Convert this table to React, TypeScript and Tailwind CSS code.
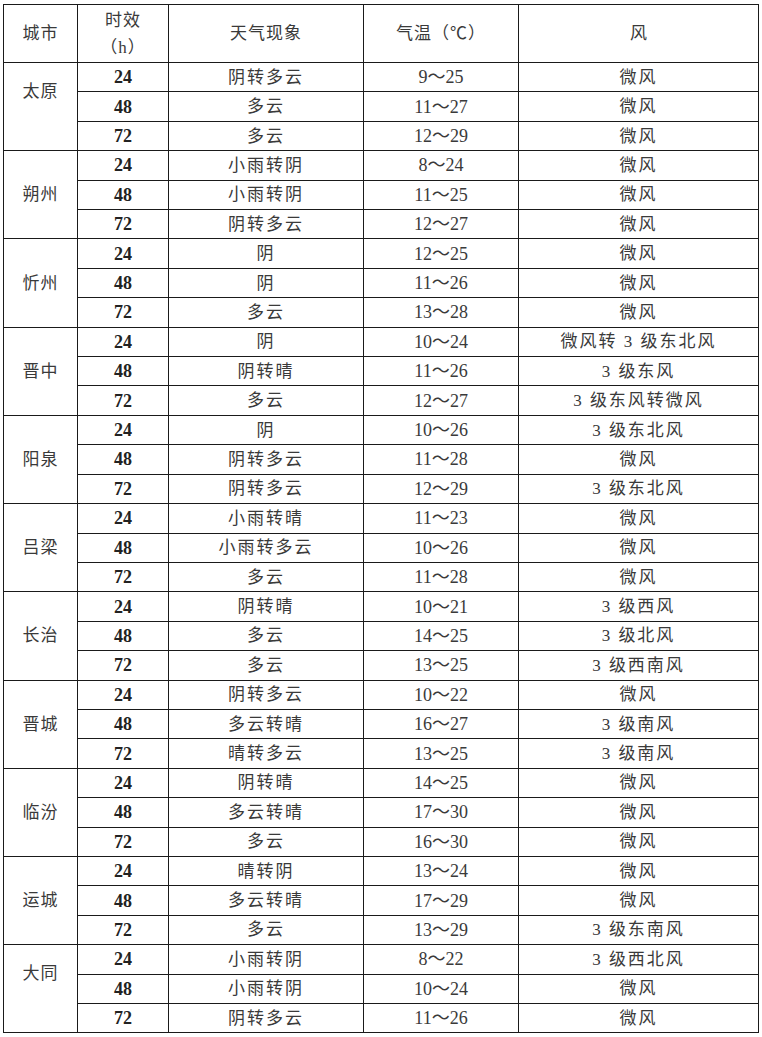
import React from 'react';

type Row = { t: string; wx: string; temp: string; wind: string };
type City = { name: string; rows: Row[]; raise?: boolean };

const cities: City[] = [
  { name: '太原', raise: true, rows: [
    { t: '24', wx: '阴转多云', temp: '9～25', wind: '微风' },
    { t: '48', wx: '多云', temp: '11～27', wind: '微风' },
    { t: '72', wx: '多云', temp: '12～29', wind: '微风' },
  ] },
  { name: '朔州', rows: [
    { t: '24', wx: '小雨转阴', temp: '8～24', wind: '微风' },
    { t: '48', wx: '小雨转阴', temp: '11～25', wind: '微风' },
    { t: '72', wx: '阴转多云', temp: '12～27', wind: '微风' },
  ] },
  { name: '忻州', rows: [
    { t: '24', wx: '阴', temp: '12～25', wind: '微风' },
    { t: '48', wx: '阴', temp: '11～26', wind: '微风' },
    { t: '72', wx: '多云', temp: '13～28', wind: '微风' },
  ] },
  { name: '晋中', rows: [
    { t: '24', wx: '阴', temp: '10～24', wind: '微风转 3 级东北风' },
    { t: '48', wx: '阴转晴', temp: '11～26', wind: '3 级东风' },
    { t: '72', wx: '多云', temp: '12～27', wind: '3 级东风转微风' },
  ] },
  { name: '阳泉', rows: [
    { t: '24', wx: '阴', temp: '10～26', wind: '3 级东北风' },
    { t: '48', wx: '阴转多云', temp: '11～28', wind: '微风' },
    { t: '72', wx: '阴转多云', temp: '12～29', wind: '3 级东北风' },
  ] },
  { name: '吕梁', rows: [
    { t: '24', wx: '小雨转晴', temp: '11～23', wind: '微风' },
    { t: '48', wx: '小雨转多云', temp: '10～26', wind: '微风' },
    { t: '72', wx: '多云', temp: '11～28', wind: '微风' },
  ] },
  { name: '长治', rows: [
    { t: '24', wx: '阴转晴', temp: '10～21', wind: '3 级西风' },
    { t: '48', wx: '多云', temp: '14～25', wind: '3 级北风' },
    { t: '72', wx: '多云', temp: '13～25', wind: '3 级西南风' },
  ] },
  { name: '晋城', rows: [
    { t: '24', wx: '阴转多云', temp: '10～22', wind: '微风' },
    { t: '48', wx: '多云转晴', temp: '16～27', wind: '3 级南风' },
    { t: '72', wx: '晴转多云', temp: '13～25', wind: '3 级南风' },
  ] },
  { name: '临汾', rows: [
    { t: '24', wx: '阴转晴', temp: '14～25', wind: '微风' },
    { t: '48', wx: '多云转晴', temp: '17～30', wind: '微风' },
    { t: '72', wx: '多云', temp: '16～30', wind: '微风' },
  ] },
  { name: '运城', rows: [
    { t: '24', wx: '晴转阴', temp: '13～24', wind: '微风' },
    { t: '48', wx: '多云转晴', temp: '17～29', wind: '微风' },
    { t: '72', wx: '多云', temp: '13～29', wind: '3 级东南风' },
  ] },
  { name: '大同', raise: true, rows: [
    { t: '24', wx: '小雨转阴', temp: '8～22', wind: '3 级西北风' },
    { t: '48', wx: '小雨转阴', temp: '10～24', wind: '微风' },
    { t: '72', wx: '阴转多云', temp: '11～26', wind: '微风' },
  ] },
];

const cell = 'border border-[#1a1a1a] text-center align-middle p-0';

export default function App() {
  return (
    <div
      className="bg-white w-[762px] h-[1037px] pt-[4px] pl-[3px] text-[#3a3a3a] text-[17px] leading-none"
      style={{ fontFamily: '"Liberation Serif", "Noto Sans CJK SC", serif' }}
    >
      <table className="border-collapse table-fixed w-[755px]">
        <colgroup>
          <col className="w-[74px]" />
          <col className="w-[91px]" />
          <col className="w-[195px]" />
          <col className="w-[155px]" />
          <col className="w-[240px]" />
        </colgroup>
        <thead>
          <tr className="h-[58px]">
            <th className={`${cell} font-normal tracking-[1px]`}>城市</th>
            <th className={`${cell} font-normal`}>
              <div className="flex flex-col items-center gap-[10px] tracking-[1px]">
                <span>时效</span>
                <span>（h）</span>
              </div>
            </th>
            <th className={`${cell} font-normal tracking-[1px]`}>天气现象</th>
            <th className={`${cell} font-normal tracking-[1px]`}>气温（℃）</th>
            <th className={`${cell} font-normal`}>风</th>
          </tr>
        </thead>
        <tbody>
          {cities.map((c) =>
            c.rows.map((r, i) => (
              <tr key={c.name + r.t} className="h-[29.42px]">
                {i === 0 && (
                  <td rowSpan={3} className={`${cell} tracking-[1px]`}>
                    <span className={c.raise ? 'block pb-[30px]' : 'block'}>{c.name}</span>
                  </td>
                )}
                <td className={`${cell} font-bold text-[#222] text-[18px]`}>{r.t}</td>
                <td className={`${cell} tracking-[2px]`}>{r.wx}</td>
                <td className={`${cell} text-[18px]`}>{r.temp}</td>
                <td className={`${cell} tracking-[2px]`}>{r.wind}</td>
              </tr>
            ))
          )}
        </tbody>
      </table>
    </div>
  );
}
